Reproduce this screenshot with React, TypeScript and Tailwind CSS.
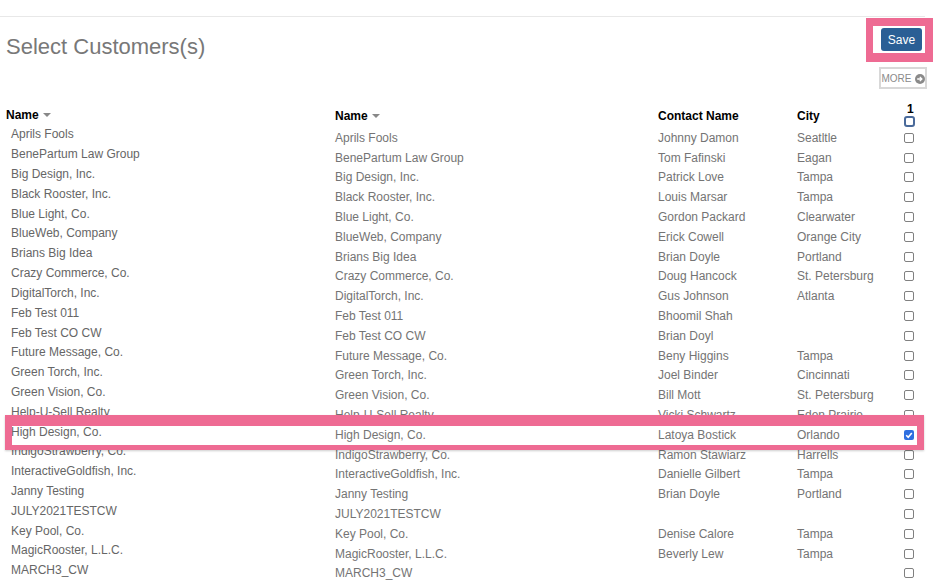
const customers = [
  { name: "Aprils Fools", contact: "Johnny Damon", city: "Seatltle" },
  { name: "BenePartum Law Group", contact: "Tom Fafinski", city: "Eagan" },
  { name: "Big Design, Inc.", contact: "Patrick Love", city: "Tampa" },
  { name: "Black Rooster, Inc.", contact: "Louis Marsar", city: "Tampa" },
  { name: "Blue Light, Co.", contact: "Gordon Packard", city: "Clearwater" },
  { name: "BlueWeb, Company", contact: "Erick Cowell", city: "Orange City" },
  { name: "Brians Big Idea", contact: "Brian Doyle", city: "Portland" },
  { name: "Crazy Commerce, Co.", contact: "Doug Hancock", city: "St. Petersburg" },
  { name: "DigitalTorch, Inc.", contact: "Gus Johnson", city: "Atlanta" },
  { name: "Feb Test 011", contact: "Bhoomil Shah", city: "" },
  { name: "Feb Test CO CW", contact: "Brian Doyl", city: "" },
  { name: "Future Message, Co.", contact: "Beny Higgins", city: "Tampa" },
  { name: "Green Torch, Inc.", contact: "Joel Binder", city: "Cincinnati" },
  { name: "Green Vision, Co.", contact: "Bill Mott", city: "St. Petersburg" },
  { name: "Help-U-Sell Realty", contact: "Vicki Schwartz", city: "Eden Prairie" },
  { name: "High Design, Co.", contact: "Latoya Bostick", city: "Orlando", checked: true },
  { name: "IndigoStrawberry, Co.", contact: "Ramon Stawiarz", city: "Harrells" },
  { name: "InteractiveGoldfish, Inc.", contact: "Danielle Gilbert", city: "Tampa" },
  { name: "Janny Testing", contact: "Brian Doyle", city: "Portland" },
  { name: "JULY2021TESTCW", contact: "", city: "" },
  { name: "Key Pool, Co.", contact: "Denise Calore", city: "Tampa" },
  { name: "MagicRooster, L.L.C.", contact: "Beverly Lew", city: "Tampa" },
  { name: "MARCH3_CW", contact: "", city: "" },
]

function SortCaret() {
  return <span className="ml-1 inline-block h-0 w-0 border-x-[4px] border-t-[4px] border-x-transparent border-t-[#888]" />
}

function Checkbox({ checked }: { checked?: boolean }) {
  if (checked) {
    return (
      <span className="flex h-[10px] w-[10px] items-center justify-center rounded-[2px] bg-[#2f6fe0]">
        <svg viewBox="0 0 10 10" className="h-[10px] w-[10px]" fill="none" stroke="white" strokeWidth="1.6">
          <path d="M2.2 5.2 4.2 7.2 7.8 3" />
        </svg>
      </span>
    )
  }
  return <span className="block h-[10px] w-[10px] rounded-[2px] border border-[#808080] bg-white" />
}

export default function App() {
  return (
    <div className="relative h-[582px] w-[936px] overflow-hidden bg-white font-['Liberation_Sans',Arial,sans-serif]">
      <div className="h-[17px] w-[925px] border-b border-[#e8e8e8]" />

      <div className="flex h-[88px] justify-between">
        <h1 className="mt-[14px] pl-[6px] text-[22px] leading-[32px] font-normal text-[#787878]">Select Customers(s)</h1>
        <div className="flex flex-col items-end pr-[3px]">
          <div className="mt-[1px] flex h-[44px] w-[67px] items-center justify-end border-t-[8px] border-r-[8px] border-b-[9px] border-l-[7px] border-[#ee6b93] pr-[3px]">
            <button className="h-[23px] w-[41px] rounded-[3px] bg-[#2a5f95] text-[12px] text-white">Save</button>
          </div>
          <button className="mt-[5px] mr-[6px] flex h-[22px] w-[48px] items-center justify-center gap-[3px] border-2 border-[#d8d8d8] pt-px text-[10px] text-[#8a8a8a]">
            MORE
            <svg viewBox="0 0 10 10" className="h-[10px] w-[10px]">
              <circle cx="5" cy="5" r="5" fill="#8a8a8a" />
              <path d="M2.2 5h4M4.8 2.9 6.9 5 4.8 7.1" fill="none" stroke="white" strokeWidth="1.3" />
            </svg>
          </button>
        </div>
      </div>

      <div className="flex">
        <div className="w-[335px]">
          <div className="flex h-[19.5px] items-center pl-[6px] text-[12px] font-bold text-black">
            Name
            <SortCaret />
          </div>
          {customers.map((c) => (
            <div key={c.name} className="flex h-[19.82px] items-center pl-[11px] text-[12px] text-[#666]">
              {c.name}
            </div>
          ))}
        </div>

        <div className="flex-1">
          <div className="flex h-[23px] items-center pb-[2px] text-[12px] font-bold text-black">
            <div className="flex w-[323px] items-center">
              Name
              <SortCaret />
            </div>
            <div className="w-[139px]">Contact Name</div>
            <div className="w-[107px]">City</div>
            <div className="flex flex-col leading-none">
              <span className="pl-[3px] text-[12px] leading-[8px]">1</span>
              <span className="mt-[3px] block h-[11px] w-[11px] rounded-[3px] border-2 border-[#4a6a9a]" />
            </div>
          </div>
          {customers.map((c) => (
            <div key={c.name} className="flex h-[19.8px] items-center text-[12px] text-[#747474]">
              <div className="w-[323px]">{c.name}</div>
              <div className="w-[139px]">{c.contact}</div>
              <div className="w-[107px]">{c.city}</div>
              <Checkbox checked={c.checked} />
            </div>
          ))}
        </div>
      </div>

      <div className="absolute top-[415px] left-[5px] h-[35px] w-[919px] border-x-[7px] border-t-[11px] border-b-[5px] border-[#ee6b93] shadow-[0_1px_2px_rgba(0,0,0,0.2)]" />
    </div>
  )
}
